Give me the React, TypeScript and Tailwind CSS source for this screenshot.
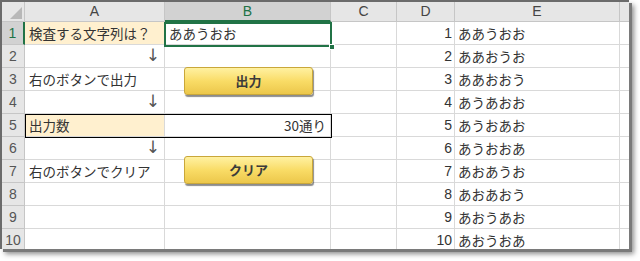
const jp = "font-['Noto_Sans_CJK_JP',sans-serif]";

const perms = ["ああうおお", "ああおうお", "ああおおう", "あうあおお", "あうおあお", "あうおおあ", "あおあうお", "あおあおう", "あおうあお", "あおうおあ"];

type Row = { a?: string; arrow?: boolean; aFill?: boolean; b?: string; bRight?: boolean };

const down = "↓\uFE0E";

const rows: Row[] = [
  { a: "検査する文字列は？", aFill: true, b: "ああうおお" },
  { a: down, arrow: true },
  { a: "右のボタンで出力" },
  { a: down, arrow: true },
  { a: "出力数", aFill: true, b: "30通り", bRight: true },
  { a: down, arrow: true },
  { a: "右のボタンでクリア" },
  {},
  {},
  {},
];

const cols = ["A", "B", "C", "D", "E"];

function YellowButton({ label, top }: { label: string; top: string }) {
  return (
    <div
      className={`absolute left-[182px] ${top} flex h-[28px] w-[129px] items-center justify-center rounded-[3px] border border-[#c9a73a] bg-linear-to-b from-[#fff1a0] via-[#f9dc66] to-[#ecc74a] text-[13px] font-bold text-[#3b3b3b] shadow-[1px_2px_1px_rgba(0,0,0,0.45)] ${jp}`}
    >
      {label}
    </div>
  );
}

export default function App() {
  return (
    <div className="relative h-[261px] w-[640px] bg-white">
      <div className="relative h-[249px] w-[629px] overflow-hidden border-l-2 border-t-2 border-[#6b6b6b] bg-white shadow-[3px_3px_0_#7a7a7a,5px_5px_5px_rgba(0,0,0,0.45)]">
        <div className="grid grid-cols-[23px_140px_166px_66px_58px_165px_9px] grid-rows-[20px_repeat(10,23px)]">
          {/* header row */}
          <div className="relative border-b border-r border-[#c6c6c6] bg-[#e6e6e6]">
            <svg className="absolute bottom-[2px] right-[2px]" width="12" height="12" viewBox="0 0 12 12">
              <polygon points="12,0 12,12 0,12" fill="#b8b8b8" />
            </svg>
          </div>
          {cols.map((c) => (
            <div
              key={c}
              className={`flex items-center justify-center border-r border-[#c6c6c6] font-['Liberation_Sans',sans-serif] text-[14px] ${
                c === "B" ? "border-b-2 border-b-[#217346] bg-[#d2d2d2] text-[#217346]" : "border-b border-b-[#c6c6c6] bg-[#e6e6e6] text-[#444]"
              }`}
            >
              {c}
            </div>
          ))}
          <div className="border-b border-[#c6c6c6] bg-[#e6e6e6]" />

          {rows.map((r, i) => (
            <Cells key={i} row={r} n={i + 1} />
          ))}
        </div>

        {/* B1 selection */}
        <div className="absolute left-[162px] top-[20px] h-[25px] w-[168px] border-2 border-[#217346]" />
        <div className="absolute left-[327px] top-[42px] h-[6px] w-[6px] border border-white bg-[#217346]" />

        {/* A5:B5 border */}
        <div className="absolute left-[23px] top-[112px] h-[24px] w-[307px] border border-black" />

        <YellowButton label="出力" top="top-[65px]" />
        <YellowButton label="クリア" top="top-[154px]" />
      </div>
    </div>
  );
}

function Cells({ row, n }: { row: Row; n: number }) {
  const line = "border-b border-r border-[#d9d9d9]";
  return (
    <>
      <div
        className={`flex items-center justify-center border-b font-['Liberation_Sans',sans-serif] text-[14px] ${
          n === 1 ? "border-r-2 border-b-[#c6c6c6] border-r-[#217346] bg-[#d2d2d2] text-[#217346]" : "border-r border-[#c6c6c6] bg-[#e6e6e6] text-[#555]"
        }`}
      >
        {n}
      </div>
      <div
        className={`${line} flex items-center px-[4px] ${
          row.arrow ? "justify-end font-['DejaVu_Sans',sans-serif] text-[17px] text-[#555]" : `text-[13.5px] text-[#333] ${jp}`
        } ${row.aFill ? "bg-[#fff0cf]" : ""}`}
      >
        {row.a}
      </div>
      <div className={`${line} flex items-center px-[4px] text-[13.5px] text-[#333] ${jp} ${row.bRight ? "justify-end" : ""}`}>{row.b}</div>
      <div className={line} />
      <div className={`${line} flex items-center justify-end pr-[2px] font-['Liberation_Sans',sans-serif] text-[14px] text-[#333]`}>{n}</div>
      <div className={`${line} flex items-center px-[3px] text-[13.5px] text-[#333] ${jp}`}>{perms[n - 1]}</div>
      <div className="border-b border-[#d9d9d9]" />
    </>
  );
}
